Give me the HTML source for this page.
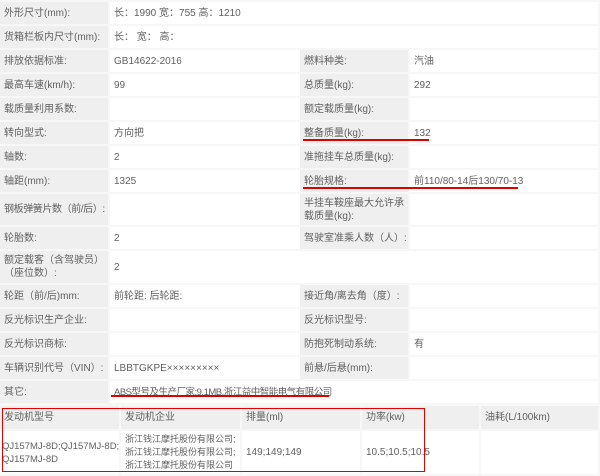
<!DOCTYPE html>
<html><head><meta charset="utf-8"><style>
*{margin:0;padding:0;box-sizing:border-box}
body{width:600px;height:476px;background:#fff;position:relative;overflow:hidden;font-family:"Liberation Sans","Noto Sans CJK SC",sans-serif;font-size:10px;color:#606060}
.c{position:absolute;display:flex;align-items:center;padding-left:4px;line-height:13px;white-space:nowrap;overflow:hidden}
.m{white-space:normal}
.g{background:#efefef}
.w{background:#fff}
.r{position:absolute;background:#e00000;height:1.5px}
</style></head><body>
<div style="position:absolute;left:0;top:0;width:600px;height:476px;background:#f7f7f7"></div>
<div class="c g" style="left:0;top:2px;width:108px;height:22px">外形尺寸(mm):</div>
<div class="c w" style="left:110px;top:2px;width:488px;height:22px">长：1990 宽：755 高：1210</div>
<div class="c g" style="left:0;top:26px;width:108px;height:22px">货箱栏板内尺寸(mm):</div>
<div class="c w" style="left:110px;top:26px;width:488px;height:22px">长：&nbsp;宽：&nbsp;高：</div>

<div class="c g" style="left:0;top:50px;width:108px;height:22px">排放依据标准:</div>
<div class="c w" style="left:110px;top:50px;width:190px;height:22px">GB14622-2016</div>
<div class="c g" style="left:300px;top:50px;width:108px;height:22px">燃料种类:</div>
<div class="c w" style="left:410px;top:50px;width:188px;height:22px">汽油</div>

<div class="c g" style="left:0;top:74px;width:108px;height:22px">最高车速(km/h):</div>
<div class="c w" style="left:110px;top:74px;width:190px;height:22px">99</div>
<div class="c g" style="left:300px;top:74px;width:108px;height:22px">总质量(kg):</div>
<div class="c w" style="left:410px;top:74px;width:188px;height:22px">292</div>

<div class="c g" style="left:0;top:98px;width:108px;height:22px">载质量利用系数:</div>
<div class="c w" style="left:110px;top:98px;width:190px;height:22px"></div>
<div class="c g" style="left:300px;top:98px;width:108px;height:22px">额定载质量(kg):</div>
<div class="c w" style="left:410px;top:98px;width:188px;height:22px"></div>

<div class="c g" style="left:0;top:122px;width:108px;height:22px">转向型式:</div>
<div class="c w" style="left:110px;top:122px;width:190px;height:22px">方向把</div>
<div class="c g" style="left:300px;top:122px;width:108px;height:22px">整备质量(kg):</div>
<div class="c w" style="left:410px;top:122px;width:188px;height:22px">132</div>

<div class="c g" style="left:0;top:146px;width:108px;height:22px">轴数:</div>
<div class="c w" style="left:110px;top:146px;width:190px;height:22px">2</div>
<div class="c g" style="left:300px;top:146px;width:108px;height:22px">准拖挂车总质量(kg):</div>
<div class="c w" style="left:410px;top:146px;width:188px;height:22px"></div>

<div class="c g" style="left:0;top:170px;width:108px;height:22px">轴距(mm):</div>
<div class="c w" style="left:110px;top:170px;width:190px;height:22px">1325</div>
<div class="c g" style="left:300px;top:170px;width:108px;height:22px">轮胎规格:</div>
<div class="c w" style="left:410px;top:170px;width:188px;height:22px">前110/80-14后130/70-13</div>

<div class="c g" style="left:0;top:194px;width:108px;height:31px;letter-spacing:-0.4px">钢板弹簧片数（前/后）:</div>
<div class="c w" style="left:110px;top:194px;width:190px;height:31px"></div>
<div class="c g m" style="left:300px;top:194px;width:108px;height:31px">半挂车鞍座最大允许承载质量(kg):</div>
<div class="c w" style="left:410px;top:194px;width:188px;height:31px"></div>

<div class="c g" style="left:0;top:227px;width:108px;height:22px">轮胎数:</div>
<div class="c w" style="left:110px;top:227px;width:190px;height:22px">2</div>
<div class="c g" style="left:300px;top:227px;width:108px;height:22px">驾驶室准乘人数（人）:</div>
<div class="c w" style="left:410px;top:227px;width:188px;height:22px"></div>

<div class="c g m" style="left:0;top:251px;width:108px;height:32px">额定载客（含驾驶员）（座位数）:</div>
<div class="c w" style="left:110px;top:251px;width:488px;height:32px">2</div>

<div class="c g" style="left:0;top:285px;width:108px;height:22px">轮距（前/后)mm:</div>
<div class="c w" style="left:110px;top:285px;width:190px;height:22px">前轮距: 后轮距:</div>
<div class="c g" style="left:300px;top:285px;width:108px;height:22px">接近角/离去角（度）:</div>
<div class="c w" style="left:410px;top:285px;width:188px;height:22px"></div>

<div class="c g" style="left:0;top:309px;width:108px;height:22px">反光标识生产企业:</div>
<div class="c w" style="left:110px;top:309px;width:190px;height:22px"></div>
<div class="c g" style="left:300px;top:309px;width:108px;height:22px">反光标识型号:</div>
<div class="c w" style="left:410px;top:309px;width:188px;height:22px"></div>

<div class="c g" style="left:0;top:333px;width:108px;height:22px">反光标识商标:</div>
<div class="c w" style="left:110px;top:333px;width:190px;height:22px"></div>
<div class="c g" style="left:300px;top:333px;width:108px;height:22px">防抱死制动系统:</div>
<div class="c w" style="left:410px;top:333px;width:188px;height:22px">有</div>

<div class="c g" style="left:0;top:357px;width:108px;height:22px">车辆识别代号（VIN）:</div>
<div class="c w" style="left:110px;top:357px;width:190px;height:22px">LBBTGKPE×××××××××</div>
<div class="c g" style="left:300px;top:357px;width:108px;height:22px">前悬/后悬(mm):</div>
<div class="c w" style="left:410px;top:357px;width:188px;height:22px"></div>

<div class="c g" style="left:0;top:381px;width:108px;height:22px">其它:</div>
<div class="c w" style="left:110px;top:381px;width:488px;height:22px;font-size:9.5px;letter-spacing:-0.5px">ABS型号及生产厂家:9.1MB,浙江益中智能电气有限公司</div>

<div class="c g" style="left:0;top:406px;width:119px;height:23px">发动机型号</div>
<div class="c g" style="left:121px;top:406px;width:119px;height:23px">发动机企业</div>
<div class="c g" style="left:242px;top:406px;width:118px;height:23px">排量(ml)</div>
<div class="c g" style="left:362px;top:406px;width:117px;height:23px">功率(kw)</div>
<div class="c g" style="left:481px;top:406px;width:117px;height:23px">油耗(L/100km)</div>
<div class="c w" style="left:0;top:431px;width:119px;height:43px;padding-left:2px;font-size:9.5px">QJ157MJ-8D;QJ157MJ-8D;<br>QJ157MJ-8D</div>
<div class="c w" style="left:121px;top:431px;width:119px;height:43px;line-height:13px;font-size:9px">浙江钱江摩托股份有限公司;<br>浙江钱江摩托股份有限公司;<br>浙江钱江摩托股份有限公司</div>
<div class="c w" style="left:242px;top:431px;width:118px;height:43px">149;149;149</div>
<div class="c w" style="left:362px;top:431px;width:117px;height:43px">10.5;10.5;10.5</div>
<div class="c w" style="left:481px;top:431px;width:117px;height:43px"></div>

<div class="r" style="left:303px;top:139px;width:126px"></div>
<div class="r" style="left:303px;top:187px;width:215px"></div>
<div class="r" style="left:111px;top:395px;width:218px"></div>
<div style="position:absolute;left:2px;top:408px;width:423px;height:64px;border:1.5px solid #e00000"></div>
</body></html>
